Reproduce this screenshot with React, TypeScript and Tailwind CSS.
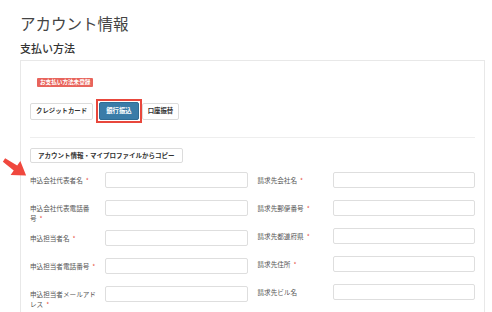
import React from "react";

type Field = { lines: string[]; required?: boolean };

const leftFields: Field[] = [
  { lines: ["申込会社代表者名"], required: true },
  { lines: ["申込会社代表電話番", "号"], required: true },
  { lines: ["申込担当者名"], required: true },
  { lines: ["申込担当者電話番号"], required: true },
  { lines: ["申込担当者メールアド", "レス"], required: true },
  { lines: ["申込担当者部署名"] },
];

const rightFields: Field[] = [
  { lines: ["請求先会社名"], required: true },
  { lines: ["請求先郵便番号"], required: true },
  { lines: ["請求先都道府県"], required: true },
  { lines: ["請求先住所"], required: true },
  { lines: ["請求先ビル名"] },
  { lines: ["請求先担当者名"] },
];

function FormRow({ field }: { field: Field }) {
  const twoLines = field.lines.length > 1;
  return (
    <div className={`flex items-start ${twoLines ? "mb-[7px]" : "mb-[12px]"}`}>
      <div className="mt-[3px] w-[75px] shrink-0 whitespace-nowrap text-[6.6px] leading-[10px] text-[#555]">
        {field.lines.map((line, i) => (
          <div key={i}>
            {line}
            {field.required && i === field.lines.length - 1 && (
              <span className="ml-[3px] text-[#e74c3c]">*</span>
            )}
          </div>
        ))}
      </div>
      <input
        type="text"
        className="h-[16px] min-w-0 flex-1 rounded-[2px] border border-[#dedede] bg-white outline-none"
      />
    </div>
  );
}

function Column({ fields }: { fields: Field[] }) {
  return (
    <div className="flex flex-col">
      {fields.map((f, i) => (
        <FormRow key={i} field={f} />
      ))}
    </div>
  );
}

export default function App() {
  return (
    <div className="relative min-h-screen bg-white font-['Noto_Sans_CJK_JP','Liberation_Sans',sans-serif] text-[#333]">
      <div className="pl-[20px]">
        <h1 className="pt-[13px] text-[15.5px] leading-[20px] font-normal text-[#444]">
          アカウント情報
        </h1>
        <h2 className="mt-[8px] text-[11px] leading-[14px] font-medium text-[#333]">
          支払い方法
        </h2>

        <div className="mt-[5px] w-[465px] border border-[#e8e8e8] px-[9px] pt-[17px] pb-[20px]">
          <div className="flex">
            <span className="ml-[7px] h-[9px] rounded-[1px] bg-[#e8645c] px-[3px] text-[5.6px] leading-[9px] font-bold text-white">
              お支払い方法未登録
            </span>
          </div>

          <div className="mt-[15px] flex h-[18px] items-center">
            <button className="flex h-[17px] items-center rounded-[2px] border border-[#dcdcdc] bg-white px-[5px] text-[6.4px] leading-none font-bold text-[#333]">
              クレジットカード
            </button>
            <div className="relative ml-[6px] flex">
              <button className="flex h-[18px] items-center rounded-[2px] border border-[#2f6c94] bg-[#3a7ca8] px-[6px] text-[6.4px] leading-none font-bold text-white">
                銀行振込
              </button>
              <span className="pointer-events-none absolute -inset-[3px] border-[2.5px] border-[#e8473c]" />
            </div>
            <button className="ml-[3px] flex h-[17px] items-center rounded-[2px] border border-[#dcdcdc] bg-white px-[5px] text-[6.4px] leading-none font-bold text-[#333]">
              口座振替
            </button>
          </div>

          <div className="mt-[17px] h-px bg-[#eeeeee]" />

          <div className="mt-[10px] flex">
            <button className="flex h-[15px] items-center rounded-[2px] border border-[#dcdcdc] bg-white px-[7px] text-[6.5px] leading-none font-bold text-[#333]">
              アカウント情報・マイプロファイルからコピー
            </button>
          </div>

          <div className="mt-[9px] grid grid-cols-2 gap-x-[10px]">
            <Column fields={leftFields} />
            <Column fields={rightFields} />
          </div>
        </div>
      </div>

      <svg
        className="pointer-events-none absolute left-0 top-[150px]"
        width="34"
        height="34"
        viewBox="0 0 34 34"
      >
        <g transform="translate(4 10) rotate(35)">
          <polygon
            points="0,-2 14,-3 14,-8.5 27,0 14,8.5 14,3 0,2"
            fill="#f0483e"
          />
        </g>
      </svg>
    </div>
  );
}
